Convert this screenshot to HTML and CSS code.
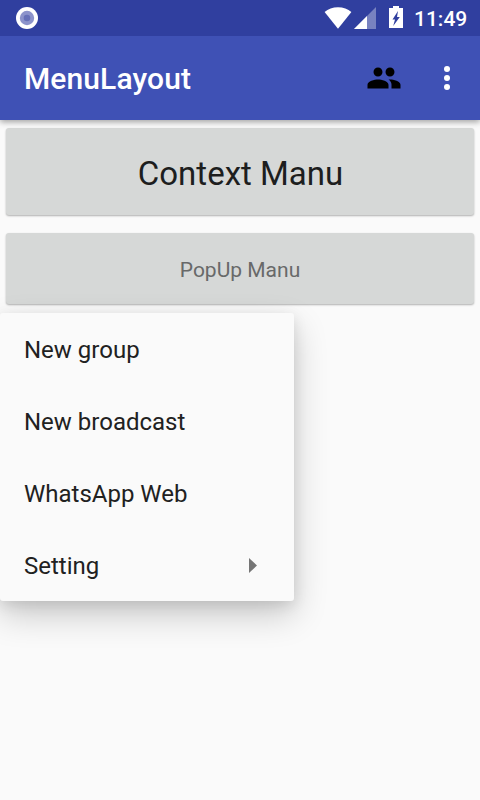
FILE: index.html
```html
<!DOCTYPE html>
<html lang="en">
<head>
<meta charset="utf-8">
<title>MenuLayout</title>
<link rel="stylesheet" href="styles.css">
</head>
<body>
<div class="status">
  <svg class="record" width="22" height="22" viewBox="0 0 22 22"><circle cx="11" cy="11" r="11" fill="#fff"/><circle cx="11" cy="11" r="7.2" fill="#8c93cb"/><circle cx="11" cy="11" r="3.3" fill="#6670b8"/></svg>
  <svg class="wifi" width="28" height="22" viewBox="0 0 28 22"><path d="M14 21.7 0.6 5Q6 0.2 14 0.2T27.4 5Z" fill="#fff"/></svg>
  <svg class="signal" width="22" height="22" viewBox="0 0 22 22"><path d="M22 0V22H0Z" fill="#fff" fill-opacity=".35"/><path d="M13 9V22H0Z" fill="#fff"/></svg>
  <svg class="battery" width="14" height="22" viewBox="0 0 14 22"><path fill="#fff" fill-rule="evenodd" d="M4 0h6v2h4v20H0V2h4ZM9 5 3.5 13.4H6L4.2 20 10.8 11H8Z"/></svg>
  <span class="clock">11:49</span>
</div>
<header class="appbar">
  <h1 class="title">MenuLayout</h1>
  <svg class="people" width="36" height="36" viewBox="0 0 24 24"><path d="M16 11c1.66 0 2.99-1.34 2.99-3S17.66 5 16 5c-1.66 0-3 1.34-3 3s1.34 3 3 3zm-8 0c1.66 0 2.99-1.34 2.99-3S9.66 5 8 5C6.34 5 5 6.34 5 8s1.34 3 3 3zm0 2c-2.33 0-7 1.17-7 3.5V19h14v-2.5c0-2.33-4.67-3.5-7-3.5zm8 0c-.29 0-.62.02-.97.05 1.16.84 1.97 1.97 1.97 3.45V19h6v-2.5c0-2.33-4.67-3.5-7-3.5z"/></svg>
  <svg class="more" width="6" height="24" viewBox="0 0 6 24" fill="#fff"><circle cx="3" cy="3" r="3"/><circle cx="3" cy="12" r="3"/><circle cx="3" cy="21" r="3"/></svg>
</header>
<main class="content">
  <button class="btn btn-context">Context Manu</button>
  <button class="btn btn-popup">PopUp Manu</button>
  <ul class="menu">
    <li class="item">New group</li>
    <li class="item">New broadcast</li>
    <li class="item">WhatsApp Web</li>
    <li class="item">Setting<svg class="arrow" width="8" height="15" viewBox="0 0 8 15"><path d="M0 0 8 7.5 0 15Z" fill="#757575"/></svg></li>
  </ul>
</main>
</body>
</html>
```
FILE: styles.css
```css
* { box-sizing: border-box; }
body {
  margin: 0;
  height: 800px;
  overflow: hidden;
  background: #fafafa;
  font-family: Roboto, "Liberation Sans", sans-serif;
  color: #212121;
}
svg { display: block; flex: none; }
.status {
  position: relative;
  z-index: 1;
  display: flex;
  align-items: flex-start;
  height: 36px;
  padding: 7px 12px 0 16px;
  background: #303f9f;
}
.wifi { margin-left: auto; margin-right: 2px; }
.signal { margin-right: 13px; }
.battery { margin-top: -1px; }
.clock {
  width: 54px;
  margin-left: 11px;
  color: #fff;
  font-size: 21px;
  font-weight: 500;
  line-height: 24px;
  white-space: nowrap;
}
.appbar {
  position: relative;
  display: flex;
  align-items: center;
  height: 84px;
  padding: 0 30px 0 24px;
  background: #3f51b5;
  box-shadow: 0 2px 6px rgba(0, 0, 0, .36);
}
.title {
  margin: 2px auto 0 0;
  color: #fff;
  font-size: 30px;
  font-weight: 500;
  line-height: 36px;
  letter-spacing: .1px;
}
.people { margin-right: 42px; }
.content { padding-top: 8px; }
.btn {
  display: flex;
  align-items: center;
  justify-content: center;
  width: 468px;
  margin: 0 6px;
  padding: 0;
  border: 0;
  border-radius: 3px;
  background: #d6d8d7;
  box-shadow: 0 1px 2px rgba(0, 0, 0, .3);
  font-family: inherit;
}
.btn-context { height: 87px; padding: 4px 0 0 1px; font-size: 33px; color: #1d1e1e; }
.btn-popup { height: 71px; margin-top: 18px; padding-top: 3px; font-size: 21px; color: #686969; }
.menu {
  position: relative;
  width: 294px;
  margin: 9px 0 0;
  padding: 0;
  list-style: none;
  border-radius: 3px;
  background: #fafafa;
  box-shadow: 0 14px 34px rgba(0, 0, 0, .2), 0 4px 14px rgba(0, 0, 0, .1);
}
.item {
  display: flex;
  align-items: center;
  justify-content: space-between;
  height: 72px;
  padding: 2px 37px 0 24px;
  font-size: 24px;
}
.arrow { margin-top: -2px; }
```
